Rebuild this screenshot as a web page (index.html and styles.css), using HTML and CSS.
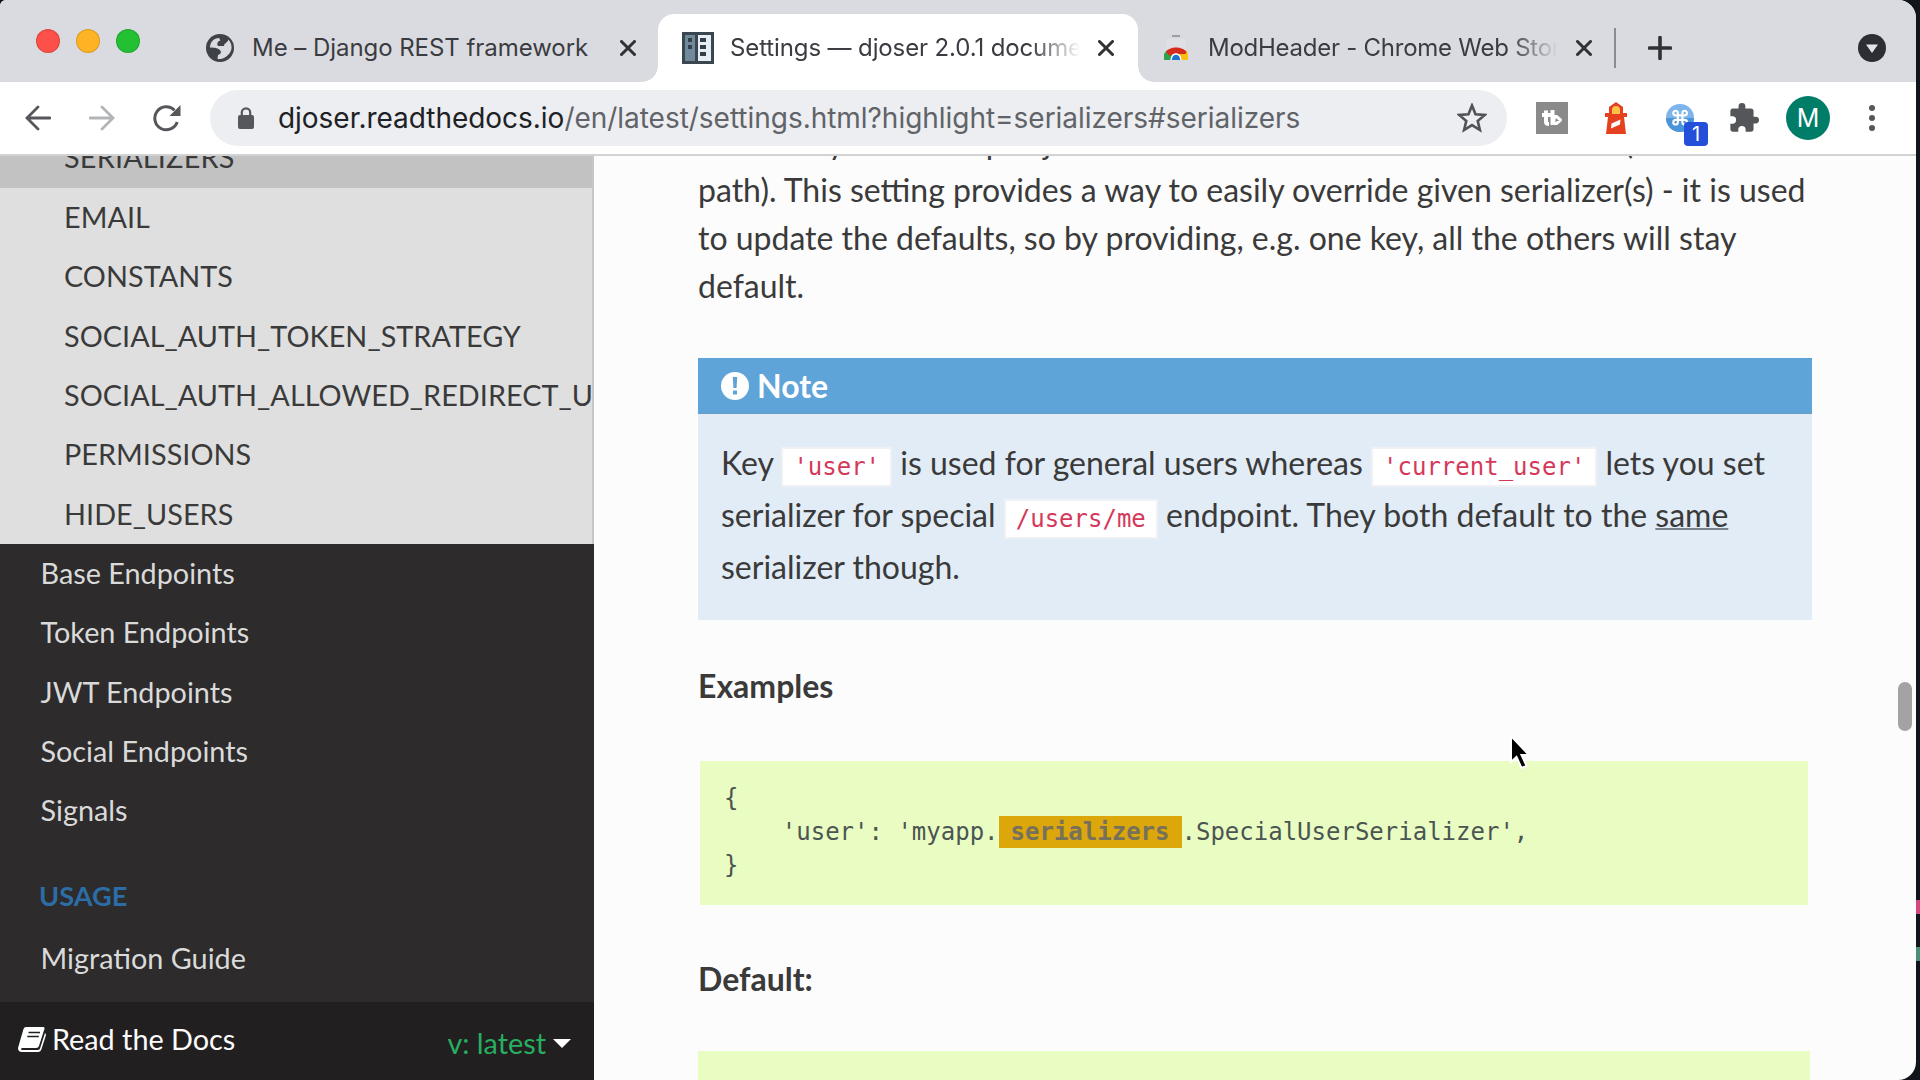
FILE: index.html
```html
<!DOCTYPE html>
<html lang="en">
<head>
<meta charset="utf-8">
<title>Settings — djoser 2.0.1 documentation</title>
<link rel="stylesheet" href="styles.css">
</head>
<body>
<div class="desktop">
<div class="window">
  <header class="tabstrip">
    <div class="lights"><i class="red"></i><i class="amber"></i><i class="green"></i></div>
    <div class="tab tab-first">
      <svg class="globe" width="28" height="28" viewBox="0 0 28 28"><circle cx="14" cy="14" r="14" fill="#3f4247"/><path d="M4 13.500C4 8 8 4 13 4l1.500 2.500C11.500 7 10.500 10 12 12h6c0-3 3.500-3 4.500-6.500C28 12 26 20 18 24l-3 1h-3.500l.5-4c4-1 3.500-4.500 1-5.500-2-2-6-1.500-9-2z" fill="#dadbe0"/></svg>
      <span class="title t1">Me – Django REST framework</span>
      <svg class="close" width="16" height="16" viewBox="0 0 16 16"><path d="M1.500 1.500l13 13M14.500 1.500l-13 13"/></svg>
    </div>
    <div class="tab tab-active">
      <svg width="32" height="32" viewBox="0 0 32 32"><path fill="#3a4750" d="M0 0h32v32H0z"/><path fill="#70899b" d="M3 3h10v26H3z"/><path fill="#e8eef5" d="M16 3h13v26H16z"/><path fill="#33404a" d="M6 6h4v4H6zM6 13h4v4H6zM18 6h6v4h-6zM18 13h6v4h-6zM18 20h6v4h-6z"/></svg>
      <span class="title t2 fade">Settings — djoser 2.0.1 documentation</span>
      <svg class="close" width="16" height="16" viewBox="0 0 16 16"><path d="M1.500 1.500l13 13M14.500 1.500l-13 13"/></svg>
    </div>
    <div class="tab tab-last">
      <svg width="24" height="26" viewBox="0 0 24 26"><path fill="#dfe0e4" d="M2 4h20v20H2z"/><path fill="#9a9ca6" d="M8 0h8v2H8z"/><path fill="#2da14c" d="M0 25V19l3-4 6 5v5z"/><path fill="#fbbf12" d="M15 25v-6l7-4 2 4v6z"/><path fill="#d52b1e" d="M2 17c3-6 17-6 20.500 0l-1 2H9l-3 2z"/><path fill="#fff" d="M6.500 25c0-9 11-9 11 0z"/><path fill="#2273d0" d="M7.800 25c0-7 8.400-7 8.400 0z"/></svg>
      <span class="title t3 fade">ModHeader - Chrome Web Store</span>
      <svg class="close" width="16" height="16" viewBox="0 0 16 16"><path d="M1.500 1.500l13 13M14.500 1.500l-13 13"/></svg>
    </div>
    <i class="sep"></i>
    <svg class="plus" width="24" height="24" viewBox="0 0 24 24"><path d="M12 1.500v21M1.500 12h21" stroke="#2f3135" stroke-width="3.600" stroke-linecap="round"/></svg>
    <svg class="search-tabs" width="28" height="28" viewBox="0 0 28 28"><circle cx="14" cy="14" r="14" fill="#2c2e33"/><path d="M8 10.500h12l-6 8.500z" fill="#e4e5ea"/></svg>
  </header>

  <div class="toolbar">
    <svg class="nav-back" width="26" height="26" viewBox="0 0 26 26"><path d="M25 13H2M13 2L2 13l11 11" fill="none" stroke="#55575b" stroke-width="2.800" stroke-linecap="round"/></svg>
    <svg class="nav-forward" width="26" height="26" viewBox="0 0 26 26"><path d="M1 13h23M13 2l11 11-11 11" fill="none" stroke="#b4b5b8" stroke-width="2.800" stroke-linecap="round"/></svg>
    <svg class="nav-reload" width="28" height="28" viewBox="0 0 28 28"><path d="M24.200 18A11.500 11.500 0 1 1 21.500 6.200" fill="none" stroke="#55575b" stroke-width="3"/><path d="M27.500 1v11h-11z" fill="#55575b"/></svg>
    <div class="omnibox">
      <svg width="16" height="22" viewBox="0 0 16 22"><path d="M3.800 9V5.500a4.200 4.200 0 0 1 8.400 0V9" fill="none" stroke="#55575d" stroke-width="2.200"/><rect y="8" width="16" height="14" rx="2" fill="#55575d"/></svg>
      <span class="url"><b>djoser.readthedocs.io</b>/en/latest/settings.html?highlight=serializers#serializers</span>
      <svg class="star" width="30" height="30" viewBox="0 0 30 30"><path d="M15 2.500l3.500 8.700 9.300.7-7.100 6 2.200 9.100-7.900-4.900L7.100 27l2.200-9.100-7.100-6 9.300-.7z" fill="none" stroke="#505256" stroke-width="2.600"/></svg>
    </div>
    <div class="extensions">
      <svg width="32" height="32" viewBox="0 0 32 32"><path fill="#8a8a8a" d="M0 0h32v32H0z"/><path d="M10 8.500V20q0 2 3 2M6 13h9M16.500 8v15" fill="none" stroke="#fff" stroke-width="4"/><path d="M18.500 14.500h2l4 3.500-4 3.500h-3z" fill="none" stroke="#fff" stroke-width="3" stroke-linejoin="round"/></svg>
      <svg width="24" height="32" viewBox="0 0 24 32"><path fill="#e5401f" d="M12 0l7 5v6h4v4h-3l2 17H2l2-17H1v-4h4V5z"/><path fill="#ffc247" d="M8 12V8a4 4 0 0 1 8 0v4z"/><path fill="#fff" d="M7.500 21.500l9-4-.5 5-9 4z"/></svg>
      <div class="command">
        <svg width="28" height="28" viewBox="0 0 28 28"><circle cx="14" cy="14" r="14" fill="#7db4ea"/><path d="M0 14a14 14 0 0 0 28 0z" fill="#4a94da"/><path transform="translate(5 4.500) scale(.76)" d="M18 3a3 3 0 0 0-3 3v12a3 3 0 1 0 3-3H6a3 3 0 1 0 3 3V6a3 3 0 1 0-3 3h12a3 3 0 0 0 0-6z" fill="none" stroke="#fff" stroke-width="2.800"/></svg>
        <span class="badge">1</span>
      </div>
      <svg class="puzzle" width="30" height="30" viewBox="1 1 22 22"><path fill="#54565a" d="M20.500 11H19V7a2 2 0 0 0-2-2h-4V3.500a2.500 2.500 0 0 0-5 0V5H4a2 2 0 0 0-2 2v3.800h1.500a2.700 2.700 0 0 1 0 5.400H2V20a2 2 0 0 0 2 2h3.800v-1.500a2.700 2.700 0 0 1 5.400 0V22H17a2 2 0 0 0 2-2v-4h1.500a2.500 2.500 0 0 0 0-5z"/></svg>
      <span class="avatar">M</span>
      <svg class="menu" width="6" height="28" viewBox="0 0 6 28"><circle cx="3" cy="4" r="3"/><circle cx="3" cy="14" r="3"/><circle cx="3" cy="24" r="3"/></svg>
    </div>
  </div>

  <div class="page">
    <nav class="sidebar">
      <ul class="sub">
        <li class="current">SERIALIZERS</li>
        <li>EMAIL</li>
        <li>CONSTANTS</li>
        <li>SOCIAL_AUTH_TOKEN_STRATEGY</li>
        <li>SOCIAL_AUTH_ALLOWED_REDIRECT_URIS</li>
        <li>PERMISSIONS</li>
        <li>HIDE_USERS</li>
      </ul>
      <ul class="top">
        <li>Base Endpoints</li>
        <li>Token Endpoints</li>
        <li>JWT Endpoints</li>
        <li>Social Endpoints</li>
        <li>Signals</li>
      </ul>
      <p class="caption">Usage</p>
      <ul class="top">
        <li>Migration Guide</li>
      </ul>
      <footer class="versions">
        <svg width="28" height="26" viewBox="0 0 28 26"><path d="M8 1h17q2 0 1.400 2L21 20q-.7 2-2.700 2H4.500q-1.500 0-1.500 1t1.500 1H20q1.600 0 2-1.400L27 7q1.300 1 .7 3l-4.200 13q-.9 3-3.500 3H4q-4 0-4-4L5.500 3Q6.200 1 8 1z" fill="#fff"/><path d="M10.500 6.500H22M9.300 10.500h11.500" stroke="#221f20" stroke-width="1.700"/></svg>
        <span class="rtd">Read the Docs</span>
        <span class="version">v: latest</span>
        <i class="caret"></i>
      </footer>
    </nav>

    <main class="content">
      <p class="intro">Dictionary which maps djoser serializer names to serializer classes (dotted<br>path). This setting provides a way to easily override given serializer(s) - it is used<br>to update the defaults, so by providing, e.g. one key, all the others will stay<br>default.</p>
      <section class="note">
        <h2><svg width="28" height="28" viewBox="0 0 28 28"><circle cx="14" cy="14" r="14" fill="#fff"/><path d="M11.800 5h4.400l-.6 11h-3.200zM12 18.500h4v4h-4z" fill="#5fa4d8"/></svg>Note</h2>
        <p>Key <code>'user'</code> is used for general users whereas <code>'current_user'</code> lets you set<br>serializer for special <code>/users/me</code> endpoint. They both default to the <u>same</u><br>serializer though.</p>
      </section>
      <p class="label">Examples</p>
      <pre class="code">{
    'user': 'myapp.<mark>serializers</mark>.SpecialUserSerializer',
}</pre>
      <p class="label label-default">Default:</p>
      <pre class="code code-next"></pre>
    </main>
    <i class="thumb"></i>
  </div>
</div>
<i class="strip pink"></i><i class="strip teal"></i>
<svg class="cursor" width="24" height="36" viewBox="0 0 24 36"><path d="M2 2v26l5.500-5 5 11 5-2.200-5-10.800H20z" fill="#000" stroke="#fff" stroke-width="2"/></svg>
</div>
</body>
</html>
```
FILE: styles.css
```css
* { box-sizing: border-box; }
body { margin: 0; }
ul, p, h2, pre { margin: 0; padding: 0; }
ul { list-style: none; }
svg { display: block; flex: none; }

.desktop { position: relative; width: 1920px; height: 1080px; overflow: hidden; background: #11151b; }
.window {
  display: flex; flex-direction: column;
  width: 1916px; height: 1080px; overflow: hidden;
  border-radius: 6px 18px 18px 0; background: #fcfcfc;
}

/* Tab strip */
.tabstrip {
  display: flex; align-items: center; flex: none;
  height: 82px; padding-top: 14px; background: #dadbe0;
  font-family: Inter, "Liberation Sans", sans-serif; font-size: 24px; color: #3a3c41;
}
.lights { display: flex; gap: 16px; width: 206px; padding-left: 36px; margin-top: -14px; }
.lights i { width: 24px; height: 24px; border-radius: 50%; border: 1px solid rgba(0,0,0,.14); }
.red { background: #fc5049; }
.amber { background: #fdb324; }
.green { background: #22c032; }
.tab { display: flex; align-items: center; height: 68px; }
.title { white-space: nowrap; overflow: hidden; line-height: 40px; }
.close { fill: none; stroke: #2f3135; stroke-width: 3; stroke-linecap: round; }
.tab-first { width: 452px; }
.t1 { width: 349px; margin-left: 18px; margin-right: 19px; letter-spacing: -.05px; }
.tab-active {
  position: relative; width: 480px; padding-left: 24px;
  background: #fff; border-radius: 16px 16px 0 0;
}
.tab-active::before, .tab-active::after {
  content: ""; position: absolute; bottom: 0; width: 16px; height: 16px;
}
.tab-active::before { left: -16px; background: radial-gradient(circle at 0 0, transparent 15.500px, #fff 16px); }
.tab-active::after { right: -16px; background: radial-gradient(circle at 100% 0, transparent 15.500px, #fff 16px); }
.t2 { width: 350px; margin-left: 16px; margin-right: 18px; letter-spacing: -.12px; }
.tab-last { width: 476px; padding-left: 26px; }
.t3 { width: 350px; margin-left: 20px; margin-right: 18px; letter-spacing: -.25px; }
.fade { -webkit-mask-image: linear-gradient(90deg, #000 86%, transparent); mask-image: linear-gradient(90deg, #000 86%, transparent); }
.sep { width: 2px; height: 40px; background: #8a8c92; }
.plus { margin-left: 32px; }
.search-tabs { margin-left: auto; margin-right: 30px; }

/* Toolbar */
.toolbar {
  display: flex; align-items: center; flex: none;
  height: 74px; padding: 0 41px 0 25px; background: #fff; border-bottom: 2px solid #d2d3d4;
  font-family: Inter, "Liberation Sans", sans-serif;
}
.nav-forward { margin-left: 38px; }
.nav-reload { margin: 0 29px 0 38px; }
.omnibox {
  display: flex; align-items: center; width: 1297px; height: 56px;
  padding: 0 20px 0 28px; border-radius: 28px; background: #edeef1;
}
.url { margin-left: 24px; font-size: 28px; letter-spacing: -.03px; color: #606368; white-space: nowrap; }
.url b { font-weight: 400; color: #202124; }
.star { margin-left: auto; }
.extensions { display: flex; align-items: center; flex: 1; margin-left: 29px; }
.extensions > :nth-child(2) { margin-left: 36px; }
.command { position: relative; margin-left: 38px; }
.badge {
  position: absolute; left: 18px; top: 18px; width: 24px; height: 24px; border-radius: 4px;
  background: #244fd8; color: #fff; font-size: 20px; line-height: 25px; text-align: center;
}
.puzzle { margin-left: 35px; }
.avatar {
  width: 44px; height: 44px; margin-left: 27px; border-radius: 50%;
  background: #007d68; color: #fff; font-size: 25px; line-height: 44px; text-align: center;
}
.menu { margin-left: auto; fill: #55575b; }

/* Documentation page */
.page { position: relative; display: flex; flex: 1; min-height: 0; overflow: hidden; font-family: Lato, "Open Sans", sans-serif; }
.sidebar {
  display: flex; flex-direction: column; flex: none;
  width: 594px; overflow: hidden; background: #2d2b2c; font-size: 28.8px;
}
.sub {
  display: flex; flex-direction: column; justify-content: flex-end; flex: none;
  height: 388px; overflow: hidden;
  background: #dfdfdf; border-right: 2px solid #c6c6c6; color: #3a3a3a;
}
.sub li { flex: none; height: 59.33px; padding-left: 64px; line-height: 59.33px; letter-spacing: .04px; white-space: nowrap; overflow: hidden; }
.sub .current { background: #c2c2c2; line-height: 57px; letter-spacing: .2px; }
.top { color: #dadada; }
.top li { height: 59.33px; padding-left: 40.5px; line-height: 59px; }
.caption {
  height: 64px; margin-top: 24px; padding-left: 39px; line-height: 62px;
  font-size: 27.2px; font-weight: 700; text-transform: uppercase; color: #2c6da5;
}
.versions {
  display: flex; align-items: center; flex: none; height: 78px; margin-top: auto;
  padding: 0 23px 5px 18px; background: #221f20;
}
.rtd { margin-left: 6px; color: #fcfcfc; }
.version { margin: 8px 7px 0 auto; color: #28ae61; }
.caret { margin-top: 9px; border: 9px solid transparent; border-top: 9px solid #fff; border-bottom: 0; }

.content { flex: 1; padding-left: 104px; color: #3a3a3a; font-size: 32px; }
.intro { margin-top: -38px; line-height: 48px; white-space: nowrap; }
.note { width: 1114px; height: 262px; margin-top: 48px; background: #e2ecf6; }
.note h2 {
  display: flex; align-items: center; gap: 8px; height: 56px; padding-left: 23px;
  background: #5fa4d8; border-bottom: 1px solid #6d9cc2; color: #fff; font-size: 32px; font-weight: 700;
}
.note p { padding: 23px 23px 0; line-height: 52px; white-space: nowrap; }
code, pre { font-family: "DejaVu Sans Mono", "Liberation Mono", monospace; font-size: 24px; }
code { padding: 4px 10px; background: #fff; border: 2px solid #f0f1f5; color: #d4395a; line-height: 1; }
u { text-decoration-thickness: 2px; text-underline-offset: 1px; text-decoration-color: #7a828b; }
.label { height: 48px; margin-top: 42px; line-height: 48px; font-weight: 700; }
.code { width: 1108px; height: 144px; margin: 51px 0 0 2px; padding: 21px 24px; background: #e9fcc2; color: #4b5552; line-height: 33.6px; }
mark { display: inline-block; height: 32px; padding: 0 12px; background: #dca70b; color: #77705a; font-weight: 700; line-height: 32px; }
.label-default { margin-top: 50px; }
.code-next { margin-top: 48px; margin-left: 0; width: 1112px; height: 60px; }
.thumb { position: absolute; right: 4px; top: 526px; width: 14px; height: 49px; border-radius: 7px; background: #a3a3a3; }

.strip { position: absolute; right: 0; width: 4px; height: 14px; }
.pink { top: 900px; background: #d4487d; }
.teal { top: 947px; background: #4b8f79; }
.cursor { position: absolute; left: 1509px; top: 734px; }
```
